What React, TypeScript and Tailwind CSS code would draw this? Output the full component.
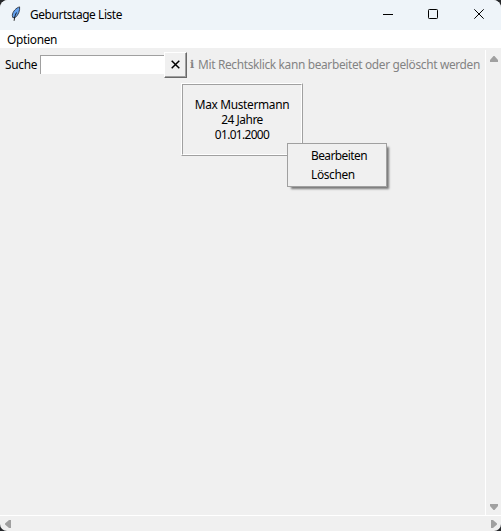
const font = 'font-["Noto_Sans","Open_Sans",sans-serif]';

function Feather() {
  return (
    <svg width="12" height="16" viewBox="0 0 12 16" className="mb-[2px] shrink-0">
      <path d="M9.6 .9C6.2 1.7 2.6 5.5 2.3 9.3L2.8 11.6 5.2 11.6C8.6 8.8 10 4.5 9.6 .9Z" fill="#62a0ee" stroke="#2b3442" strokeWidth=".9" />
      <path d="M6.5 6.5C5.5 8.5 4.6 10.5 4.1 14.8" fill="none" stroke="#111" strokeWidth=".9" />
    </svg>
  );
}

function TitleBar() {
  return (
    <header className="flex h-[30px] shrink-0 items-center bg-[#eef4f9] pl-[10px]">
      <Feather />
      <span className="ml-2 pb-px tracking-[-0.41px]">Geburtstage Liste</span>
      <div className="ml-auto flex">
        <svg width="138" height="28" viewBox="0 0 138 28" fill="none" stroke="#000">
          <path d="M20 13.5H30" />
          <rect x="65.5" y="8.5" width="9" height="9" rx=".8" />
          <path d="M111.3 8.3L120.7 17.7M120.7 8.3L111.3 17.7" />
        </svg>
      </div>
    </header>
  );
}

function Toolbar() {
  return (
    <div className="flex h-[26px] items-center">
      <span className="ml-[5px] w-[35px] pb-[2px] tracking-[-0.3px]">Suche</span>
      <input className="mb-px h-[19px] w-[124px] border-t border-l border-[#a0a0a0] bg-white outline-none" />
      <button className="flex h-[26px] w-[23px] items-center justify-center border border-t-white border-r-[#696969] border-b-[#696969] border-l-white bg-[#f0f0f0] shadow-[inset_-1px_-1px_#a0a0a0]">
        <svg width="9" height="9" viewBox="0 0 9 9" stroke="#000" strokeWidth="1.5" className="mr-px mb-px">
          <path d="M.7 .7L8.3 8.3M8.3 .7L.7 8.3" />
        </svg>
      </button>
      <span className="ml-[3px] w-[8px] pb-px font-['DejaVu_Sans',sans-serif] text-[11px] text-[#838383]">ℹ</span>
      <span className="pb-[2px] tracking-[-0.34px] text-[#838383]">Mit Rechtsklick kann bearbeitet oder gelöscht werden</span>
    </div>
  );
}

function Card() {
  return (
    <div className="mt-[5px] ml-[181px] h-[73px] w-[122px] border border-t-white border-r-[#a0a0a0] border-b-[#a0a0a0] border-l-white">
      <div className="flex h-full flex-col items-center border border-t-[#a0a0a0] border-r-white border-b-white border-l-[#a0a0a0] pt-[12px] leading-[15px]">
        <span className="tracking-[-0.33px]">Max Mustermann</span>
        <span className="tracking-[-0.45px]">24 Jahre</span>
        <span className="tracking-[-0.65px]">01.01.2000</span>
      </div>
    </div>
  );
}

function ContextMenu() {
  return (
    <div className="absolute top-[143px] left-[287px] flex h-[44px] w-[100px] flex-col border border-[#a0a0a0] bg-[#f0f0f0] pt-[2px] pl-[23px] leading-[19px] shadow-[3px_3px_2px_-1px_#00000080]">
      <span className="tracking-[-0.55px]">Bearbeiten</span>
      <span className="tracking-[-0.35px]">Löschen</span>
    </div>
  );
}

export default function App() {
  return (
    <div className="h-[531px] w-[501px] overflow-hidden bg-[#26282b]">
      <div className={`relative flex h-full flex-col overflow-hidden rounded-t-[8px] rounded-b-[7px] bg-[#f0f0f0] text-[11.9px] leading-[15px] whitespace-nowrap text-black ${font}`}>
        <TitleBar />
        <nav className="flex h-[18px] shrink-0 items-center bg-white pt-px pl-[7px]">
          <span className="tracking-[-0.3px]">Optionen</span>
        </nav>
        <div className="flex min-h-0 flex-1">
          <main className="w-[485px] pt-[4px]">
            <Toolbar />
            <Card />
          </main>
          <aside className="mt-[2px] flex w-[16px] flex-col items-center justify-between border-l border-white pt-[6px] pb-[5px]">
            <svg width="8" height="6" fill="#a0a0a0"><path d="M3.5 0H4.5L8 4V6H0V4Z" /></svg>
            <svg width="8" height="6" fill="#a0a0a0"><path d="M0 0H8V2L4.5 6H3.5L0 2Z" /></svg>
          </aside>
        </div>
        <footer className="flex h-[16px] shrink-0 items-center justify-between border-t border-white pr-[4px] pl-[5px]">
          <svg width="6" height="8" fill="#a0a0a0"><path d="M6 0V8H4L0 4.5V3.5L4 0Z" /></svg>
          <svg width="6" height="8" fill="#a0a0a0"><path d="M0 0H2L6 3.5V4.5L2 8H0Z" /></svg>
        </footer>
        <ContextMenu />
      </div>
    </div>
  );
}
